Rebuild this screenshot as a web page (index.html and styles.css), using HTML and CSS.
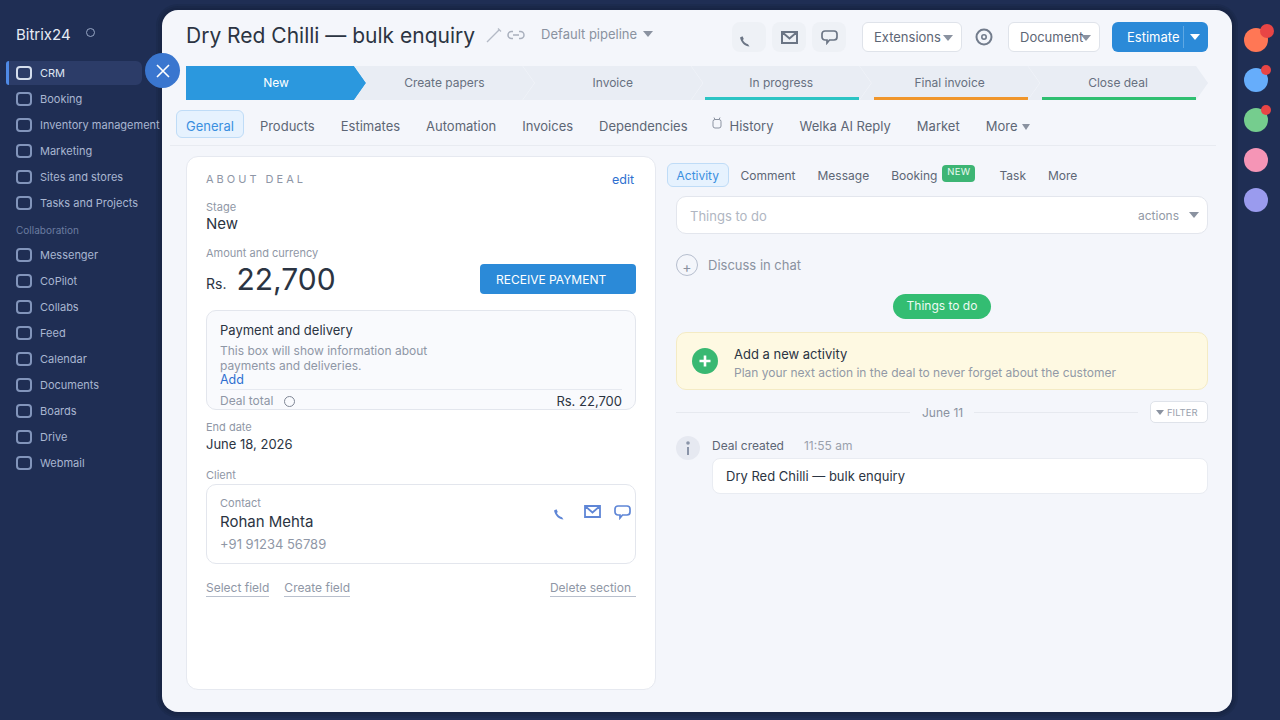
FILE: index.html
```html
<!DOCTYPE html>
<html lang="en">
<head>
    <meta charset="UTF-8">
    <title>Dry Red Chilli — bulk enquiry</title>
    <link rel="stylesheet" href="styles.css">
</head>
<body>
    <aside class="sidebar">
        <div class="brand">Bitrix24 <span class="brand-ring"></span></div>
        <nav class="nav">
            <a class="nav-item active"><span class="nav-icon"></span>CRM</a>
            <a class="nav-item"><span class="nav-icon"></span>Booking</a>
            <a class="nav-item"><span class="nav-icon"></span>Inventory management</a>
            <a class="nav-item"><span class="nav-icon"></span>Marketing</a>
            <a class="nav-item"><span class="nav-icon"></span>Sites and stores</a>
            <a class="nav-item"><span class="nav-icon"></span>Tasks and Projects</a>
            <div class="nav-group">Collaboration</div>
            <a class="nav-item"><span class="nav-icon"></span>Messenger</a>
            <a class="nav-item"><span class="nav-icon"></span>CoPilot</a>
            <a class="nav-item"><span class="nav-icon"></span>Collabs</a>
            <a class="nav-item"><span class="nav-icon"></span>Feed</a>
            <a class="nav-item"><span class="nav-icon"></span>Calendar</a>
            <a class="nav-item"><span class="nav-icon"></span>Documents</a>
            <a class="nav-item"><span class="nav-icon"></span>Boards</a>
            <a class="nav-item"><span class="nav-icon"></span>Drive</a>
            <a class="nav-item"><span class="nav-icon"></span>Webmail</a>
        </nav>
    </aside>

    <button class="close-btn">
        <svg width="14" height="14" viewBox="0 0 14 14"><path d="M1 1L13 13M13 1L1 13" stroke="#fff" stroke-width="1.6" fill="none"/></svg>
    </button>

    <main class="main">
        <header class="head">
            <h1 class="title">Dry Red Chilli — bulk enquiry</h1>
            <svg class="title-icon" width="16" height="16" viewBox="0 0 16 16"><path d="M1 15L13 3M12 1.500L15 4.500" stroke="#b4bac6" stroke-width="1.400" fill="none"/></svg>
            <svg class="title-icon link-icon" width="18" height="10" viewBox="0 0 18 10"><path d="M6 1.500H4.500a3.500 3.500 0 0 0 0 7H6M12 1.500h1.500a3.500 3.500 0 0 1 0 7H12M6 5h6" stroke="#a9b0bd" stroke-width="1.500" fill="none"/></svg>
            <span class="pipeline">Default pipeline <i class="caret"></i></span>
            <div class="head-actions">
                <span class="icon-btn">
                    <svg class="phone-glyph" width="12" height="12" viewBox="0 0 12 12"><path d="M1 2.500L3.500 1.200L4.800 4L3.800 5C4.800 7 6.300 8.300 9 9.300L10.500 11.500C6 11.500 2 7.500 1 2.500Z" fill="#6b7585"/></svg>
                </span>
                <span class="icon-btn">
                    <svg width="17" height="13" viewBox="0 0 17 13"><path d="M1 1H16V12H1ZM1 1L8.500 7.500L16 1" stroke="#6b7585" stroke-width="2" fill="none"/></svg>
                </span>
                <span class="icon-btn">
                    <svg width="17" height="15" viewBox="0 0 17 15"><path d="M4 1H13a3 3 0 0 1 3 3V7a3 3 0 0 1-3 3H8.500L6 13V10H4A3 3 0 0 1 1 7V4A3 3 0 0 1 4 1Z" stroke="#6b7585" stroke-width="1.700" fill="none"/></svg>
                </span>
                <button class="btn btn-ext">Extensions<i class="caret caret-btn"></i></button>
                <svg class="target" width="18" height="18" viewBox="0 0 18 18"><circle cx="9" cy="9" r="7.500" stroke="#727c8c" stroke-width="2" fill="none"/><circle cx="9" cy="9" r="2.200" stroke="#727c8c" stroke-width="1.600" fill="none"/></svg>
                <button class="btn btn-doc">Document<i class="caret caret-doc"></i></button>
                <button class="btn btn-estimate">Estimate<span class="split"></span><i class="caret caret-white"></i></button>
            </div>
        </header>

        <div class="stages">
            <div class="stage stage-new">New</div>
            <div class="stage">Create papers</div>
            <div class="stage">Invoice</div>
            <div class="stage">In progress<span class="stage-bar bar-teal"></span></div>
            <div class="stage">Final invoice<span class="stage-bar bar-orange"></span></div>
            <div class="stage">Close deal<span class="stage-bar bar-green"></span></div>
        </div>

        <div class="tabs">
            <a class="tab active">General</a>
            <a class="tab">Products</a>
            <a class="tab">Estimates</a>
            <a class="tab">Automation</a>
            <a class="tab">Invoices</a>
            <a class="tab">Dependencies</a>
            <a class="tab tab-history">
                <svg width="10" height="12" viewBox="0 0 10 12"><rect x="1" y="2.500" width="8" height="8.500" rx="2" stroke="#8b93a1" fill="none"/><path d="M2 0.500L3 2.500M8 0.500L7 2.500" stroke="#8b93a1" fill="none"/></svg>
                History
            </a>
            <a class="tab">Welka AI Reply</a>
            <a class="tab">Market</a>
            <a class="tab">More <i class="caret"></i></a>
        </div>

        <div class="content">
            <section class="card">
                <div class="card-head">
                    <span class="card-title">ABOUT DEAL</span>
                    <a class="link">edit</a>
                </div>

                <div class="label label-stage">Stage</div>
                <div class="value-big">New</div>

                <div class="label label-amount">Amount and currency</div>
                <div class="amount-row">
                    <span class="currency">Rs.</span>
                    <span class="amount">22,700</span>
                    <button class="btn-pay">RECEIVE PAYMENT</button>
                </div>

                <div class="pay-box">
                    <div class="pay-title">Payment and delivery</div>
                    <p class="pay-desc">This box will show information about<br>payments and deliveries.</p>
                    <a class="link pay-add">Add</a>
                    <div class="pay-total">
                        <span class="pay-total-label">Deal total <span class="ring"></span></span>
                        <span class="pay-total-value">Rs. 22,700</span>
                    </div>
                </div>

                <div class="label label-end">End date</div>
                <div class="value">June 18, 2026</div>

                <div class="label label-client">Client</div>
                <div class="client-box">
                    <div>
                        <div class="label">Contact</div>
                        <div class="client-name">Rohan Mehta</div>
                        <div class="client-phone">+91 91234 56789</div>
                    </div>
                    <div class="client-icons">
                        <svg class="client-phone-icon" width="12" height="12" viewBox="0 0 12 12"><path d="M1 2.500L3.500 1.200L4.800 4L3.800 5C4.800 7 6.300 8.300 9 9.300L10.500 11.500C6 11.500 2 7.500 1 2.500Z" fill="#5f86d6"/></svg>
                        <svg width="17" height="13" viewBox="0 0 17 13"><path d="M1 1H16V12H1ZM1 1L8.500 7.500L16 1" stroke="#5f86d6" stroke-width="1.800" fill="none"/></svg>
                        <svg width="17" height="15" viewBox="0 0 17 15"><path d="M4 1H13a3 3 0 0 1 3 3V7a3 3 0 0 1-3 3H8.500L6 13V10H4A3 3 0 0 1 1 7V4A3 3 0 0 1 4 1Z" stroke="#5f86d6" stroke-width="1.700" fill="none"/></svg>
                    </div>
                </div>

                <div class="card-actions">
                    <a class="action">Select field</a>
                    <a class="action">Create field</a>
                    <a class="action action-right">Delete section</a>
                </div>
            </section>

            <section class="activity">
                <div class="activity-tabs">
                    <a class="atab active">Activity</a>
                    <a class="atab">Comment</a>
                    <a class="atab">Message</a>
                    <a class="atab atab-booking">Booking <span class="badge-new">NEW</span></a>
                    <a class="atab">Task</a>
                    <a class="atab">More</a>
                </div>

                <div class="todo-input">
                    <span class="todo-placeholder">Things to do</span>
                    <span class="todo-actions">actions</span>
                    <i class="caret caret-actions"></i>
                </div>

                <div class="discuss">
                    <span class="discuss-plus">+</span>
                    Discuss in chat
                </div>

                <div class="pill-row"><span class="pill">Things to do</span></div>

                <div class="add-box">
                    <span class="add-icon">
                        <svg width="12" height="12" viewBox="0 0 12 12"><path d="M6 0.500V11.500M0.500 6H11.500" stroke="#fff" stroke-width="2.600" fill="none"/></svg>
                    </span>
                    <div>
                        <div class="add-title">Add a new activity</div>
                        <div class="add-desc">Plan your next action in the deal to never forget about the customer</div>
                    </div>
                </div>

                <div class="date-row">
                    <span class="date-line date-line-left"></span>
                    <span class="date-text">June 11</span>
                    <span class="date-line"></span>
                    <button class="filter"><i class="caret caret-filter"></i>FILTER</button>
                </div>

                <div class="event">
                    <span class="event-icon">
                        <svg width="4" height="14" viewBox="0 0 4 14"><circle cx="2" cy="2" r="1.800" fill="#8a94a8"/><path d="M2 6V14" stroke="#8a94a8" stroke-width="2"/></svg>
                    </span>
                    <div class="event-body">
                        <div class="event-head"><span class="event-name">Deal created</span><span class="event-time">11:55 am</span></div>
                        <div class="event-card">Dry Red Chilli — bulk enquiry</div>
                    </div>
                </div>
            </section>
        </div>
    </main>

    <aside class="rail">
        <span class="rail-dot dot-orange"><i class="rail-badge rail-badge-big"></i></span>
        <span class="rail-dot dot-blue"><i class="rail-badge"></i></span>
        <span class="rail-dot dot-green"><i class="rail-badge"></i></span>
        <span class="rail-dot dot-pink"></span>
        <span class="rail-dot dot-violet"></span>
    </aside>
</body>
</html>
```

FILE: styles.css
```css
* {
    box-sizing: border-box;
}
body {
    margin: 0;
    height: 720px;
    overflow: hidden;
    padding-top: 10px;
    display: flex;
    align-items: flex-start;
    background: #1f2e54;
    font-family: Inter, "Liberation Sans", sans-serif;
    color: #2b3442;
}
button {
    font-family: inherit;
}
.caret {
    display: inline-block;
    width: 0;
    height: 0;
    border-left: 5px solid transparent;
    border-right: 5px solid transparent;
    border-top: 6px solid #8a92a0;
}

/* sidebar */
.sidebar {
    width: 162px;
    flex: none;
    position: relative;
    z-index: 1;
    padding: 15px 0 0 6px;
}
.brand {
    display: flex;
    height: 20px;
    line-height: 20px;
    padding-left: 10px;
    font-size: 15px;
    color: #e6ebf4;
}
.brand-ring {
    width: 9px;
    height: 9px;
    margin: 3px 0 0 15px;
    border: 1.5px solid #97a6c4;
    border-radius: 50%;
}
.nav {
    margin-top: 16px;
    display: flex;
    flex-direction: column;
    gap: 2px;
}
.nav-item {
    display: flex;
    align-items: center;
    gap: 8px;
    width: 136px;
    height: 24px;
    padding-left: 10px;
    font-size: 11px;
    white-space: nowrap;
    color: #a9b6d1;
}
.nav-item.active {
    padding-left: 7px;
    border-left: 3px solid #4f8ae6;
    border-radius: 3px 6px 6px 3px;
    background: #2c3c68;
    color: #dfe6f2;
}
.nav-icon {
    flex: none;
    width: 16px;
    height: 14px;
    border: 2px solid #8295bb;
    border-radius: 4px;
}
.active .nav-icon {
    border-color: #d5deed;
}
.nav-group {
    padding: 7px 0 4px 10px;
    font-size: 10px;
    line-height: 13px;
    color: #6b7ca0;
}
.close-btn {
    position: absolute;
    left: 145px;
    top: 53px;
    z-index: 2;
    display: flex;
    align-items: center;
    justify-content: center;
    width: 35px;
    height: 35px;
    padding: 0;
    border: none;
    border-radius: 50%;
    background: #3a76cf;
}

/* main panel */
.main {
    width: 1070px;
    height: 702px;
    flex: none;
    padding: 12px 24px 22px;
    border-radius: 16px;
    background: #f4f6fb;
    box-shadow: 0 0 0 2px #182545, 0 0 0 4px #1a2849, 0 0 0 6px #1c2b4e;
}
.head {
    display: flex;
    align-items: center;
    height: 30px;
}
.title {
    margin: -4px 0 0;
    font-size: 21px;
    font-weight: 400;
    white-space: nowrap;
    color: #2b3442;
}
.title-icon {
    flex: none;
    margin: -4px 0 0 11px;
}
.link-icon {
    margin-left: 5px;
}
.pipeline {
    margin: -6px 0 0 16px;
    font-size: 13px;
    color: #8a92a0;
}
.pipeline .caret {
    margin-left: 2px;
    vertical-align: 2px;
}
.head-actions {
    display: flex;
    align-items: center;
    margin-left: auto;
}
.icon-btn {
    display: flex;
    align-items: center;
    justify-content: center;
    width: 34px;
    height: 30px;
    margin-right: 6px;
    border-radius: 8px;
    background: #eef1f6;
}
.phone-glyph {
    margin: 7px 8px 0 0;
}
.btn {
    position: relative;
    height: 30px;
    padding: 0 0 0 11px;
    border: 1px solid #dfe3ea;
    border-radius: 6px;
    background: #fff;
    font-size: 13px;
    text-align: left;
    color: #5d6675;
}
.btn-ext {
    width: 100px;
    margin-left: 10px;
}
.caret-btn {
    margin-left: 2px;
    vertical-align: 1px;
}
.target {
    margin: 0 15px 0 13px;
}
.btn-doc {
    width: 92px;
}
.caret-doc {
    position: absolute;
    right: 8px;
    top: 12px;
}
.btn-estimate {
    display: flex;
    align-items: center;
    width: 96px;
    margin-left: 12px;
    padding-left: 15px;
    border: none;
    background: #2b8ad8;
    color: #fff;
}
.split {
    width: 1px;
    height: 22px;
    margin: 0 6px 0 4px;
    background: #5fa8e3;
}
.caret-white {
    border-top-color: #fff;
}

/* stages */
.stages {
    display: flex;
    height: 34px;
    margin-top: 14px;
}
.stage {
    position: relative;
    flex: none;
    width: 180px;
    margin-right: -11.6px;
    line-height: 33px;
    text-align: center;
    font-size: 12px;
    color: #677080;
    background: #e9edf4;
    clip-path: polygon(0 0, 168px 0, 180px 50%, 168px 100%, 0 100%, 12px 50%);
}
.stage-new {
    background: #2b98de;
    color: #fff;
    clip-path: polygon(0 0, 168px 0, 180px 50%, 168px 100%, 0 100%);
}
.stage-bar {
    position: absolute;
    left: 14px;
    right: 12px;
    bottom: 0;
    height: 3px;
}
.bar-teal {
    background: #2cc4c4;
}
.bar-orange {
    background: #f0962b;
}
.bar-green {
    background: #2fbf71;
}

/* tabs */
.tabs {
    display: flex;
    gap: 6px;
    height: 36px;
    margin: 10px -8px 0 -16px;
    padding-left: 6px;
    border-bottom: 1px solid #e8ebf1;
}
.tab {
    display: flex;
    align-items: center;
    height: 28px;
    padding: 3px 9px 0;
    border: 1px solid transparent;
    border-radius: 6px;
    font-size: 13px;
    white-space: nowrap;
    color: #5d6675;
}
.tab.active {
    border-color: #bfdcf7;
    background: #e6f2fe;
    color: #3a8fe0;
}
.tab .caret {
    margin: 2px 0 0 5px;
    border-left-width: 4.5px;
    border-right-width: 4.5px;
}
.tab-history svg {
    margin: -6px 8px 0 -2px;
}

/* layout below tabs */
.content {
    display: flex;
    margin-top: 10px;
    height: 534px;
}
.card {
    flex: none;
    width: 470px;
    padding: 0 19px;
    border: 1px solid #e6e9f0;
    border-radius: 12px;
    background: #fff;
}
.card-head {
    display: flex;
    justify-content: space-between;
    align-items: center;
    height: 14px;
    margin-top: 15px;
}
.card-title {
    font-size: 11px;
    letter-spacing: 3px;
    color: #8e96a6;
}
.link {
    font-size: 12.5px;
    color: #2f6fd0;
}
.card-head .link {
    margin-right: 2px;
}
.label {
    font-size: 11px;
    line-height: 14px;
    color: #8f97a6;
}
.label-stage {
    margin-top: 14px;
}
.value-big {
    font-size: 15px;
    line-height: 18px;
    margin-top: 1px;
}
.label-amount {
    margin-top: 13px;
}
.amount-row {
    display: flex;
    align-items: center;
    height: 34px;
    margin-top: 2px;
}
.currency {
    font-size: 14px;
    margin-top: 8px;
}
.amount {
    margin-left: 10px;
    font-size: 30px;
    line-height: 34px;
}
.btn-pay {
    height: 30px;
    width: 156px;
    margin: 0 0 0 auto;
    padding: 0 0 0 16px;
    border: none;
    border-radius: 4px;
    background: #2b8ad8;
    font-size: 12px;
    text-align: left;
    color: #fff;
}
.pay-box {
    height: 100px;
    margin-top: 14px;
    padding: 11px 13px 0 13px;
    border: 1px solid #e3e6ed;
    border-radius: 10px;
    background: #f9fafd;
}
.pay-title {
    font-size: 13px;
    line-height: 16px;
}
.pay-desc {
    margin: 5px 0 0;
    font-size: 12px;
    line-height: 15px;
    color: #8f97a6;
}
.pay-add {
    display: block;
    font-size: 12.5px;
    line-height: 14px;
}
.pay-total {
    display: flex;
    justify-content: space-between;
    margin-top: 2px;
    padding-top: 3px;
    border-top: 1px solid #e6e9f0;
    line-height: 16px;
}
.pay-total-label {
    display: flex;
    align-items: center;
    gap: 11px;
    font-size: 12px;
    color: #8f97a6;
}
.ring {
    width: 11px;
    height: 11px;
    border: 1px solid #7f8695;
    border-radius: 50%;
}
.pay-total-value {
    font-size: 13px;
}
.label-end {
    margin-top: 10px;
}
.value {
    margin-top: 2px;
    font-size: 13px;
    line-height: 17px;
}
.label-client {
    margin-top: 15px;
}
.client-box {
    display: flex;
    justify-content: space-between;
    height: 80px;
    margin-top: 2px;
    padding: 11px 4px 0 13px;
    border: 1px solid #e3e6ed;
    border-radius: 10px;
}
.client-name {
    margin-top: 2px;
    font-size: 15px;
    line-height: 20px;
}
.client-phone {
    margin-top: 3px;
    font-size: 13px;
    line-height: 18px;
    color: #8f97a6;
}
.client-icons {
    display: flex;
    gap: 13px;
    margin-top: 9px;
}
.client-phone-icon {
    margin: 3px 6px 0 0;
}
.card-actions {
    display: flex;
    gap: 15px;
    margin-top: 16px;
}
.action {
    padding-bottom: 1px;
    border-bottom: 1px solid #b9c0cd;
    font-size: 12px;
    line-height: 15px;
    color: #8f97a6;
}
.action-right {
    margin-left: auto;
    padding-right: 5px;
}

/* activity column */
.activity {
    flex: 1;
    padding-left: 20px;
}
.activity-tabs {
    display: flex;
    align-items: center;
    gap: 2px;
    height: 24px;
    margin: 7px 0 0 -9px;
}
.atab {
    display: flex;
    align-items: center;
    height: 24px;
    padding: 0 9px;
    border: 1px solid transparent;
    border-radius: 6px;
    font-size: 12px;
    white-space: nowrap;
    color: #5d6675;
}
.atab.active {
    padding: 0 8.5px;
    border-color: #bfdcf7;
    background: #e6f2fe;
    color: #3a8fe0;
}
.badge-new {
    height: 17px;
    margin: -3px 0 0 5px;
    padding: 0 5px;
    border-radius: 4px;
    background: #3db574;
    font-size: 9.5px;
    line-height: 13px;
    letter-spacing: 0.3px;
    color: #e9f9f0;
}
.atab-booking {
    margin-right: 2px;
}
.todo-input {
    display: flex;
    align-items: center;
    height: 38px;
    margin-top: 9px;
    padding: 1px 8px 0 13px;
    border: 1px solid #e3e6ed;
    border-radius: 10px;
    background: #fff;
    font-size: 13px;
}
.todo-placeholder {
    color: #b0b6c2;
}
.todo-actions {
    margin-left: auto;
    font-size: 12px;
    color: #9299a6;
}
.caret-actions {
    margin: -2px 0 0 10px;
}
.discuss {
    display: flex;
    align-items: center;
    gap: 10px;
    height: 22px;
    margin-top: 20px;
    font-size: 13px;
    color: #8a92a0;
}
.discuss-plus {
    width: 22px;
    height: 22px;
    padding-top: 3px;
    border: 1px solid #b6bece;
    border-radius: 50%;
    font-size: 14px;
    line-height: 18px;
    text-align: center;
}
.pill-row {
    display: flex;
    justify-content: center;
    margin-top: 18px;
}
.pill {
    height: 25px;
    padding: 0 14px;
    border-radius: 13px;
    background: #33bd72;
    font-size: 12px;
    line-height: 24px;
    color: #eefaf3;
}
.add-box {
    display: flex;
    align-items: center;
    gap: 16px;
    height: 58px;
    margin-top: 13px;
    padding: 0 0 0 15px;
    border: 1px solid #f4ebc4;
    border-radius: 10px;
    background: #fef9e2;
}
.add-title {
    padding-top: 4px;
    font-size: 13px;
    line-height: 17px;
}
.add-desc {
    margin-top: 2px;
    font-size: 12px;
    line-height: 15px;
    color: #9299a6;
}
.add-icon {
    display: flex;
    align-items: center;
    justify-content: center;
    width: 26px;
    height: 26px;
    border-radius: 50%;
    background: #39b872;
}
.date-row {
    display: flex;
    align-items: center;
    height: 22px;
    margin-top: 11px;
}
.date-line {
    flex: 1;
    height: 1px;
    background: #e6e9ef;
}
.date-line-left {
    flex: none;
    width: 234px;
}
.date-text {
    padding: 0 11px 0 12px;
    font-size: 12px;
    color: #8a92a0;
}
.filter {
    display: flex;
    align-items: center;
    width: 58px;
    height: 22px;
    margin-left: 12px;
    padding: 0 0 0 5px;
    border: 1px solid #dfe3ea;
    border-radius: 5px;
    background: #fff;
    font-size: 9.5px;
    color: #9aa1ad;
}
.caret-filter {
    margin-right: 3px;
    border-left-width: 4px;
    border-right-width: 4px;
    border-top-width: 5px;
}
.event {
    display: flex;
    gap: 12px;
    margin-top: 13px;
}
.event-icon {
    display: flex;
    flex: none;
    align-items: center;
    justify-content: center;
    width: 24px;
    height: 24px;
    border-radius: 50%;
    background: #e6e9f1;
}
.event-body {
    flex: 1;
}
.event-head {
    display: flex;
    gap: 20px;
    height: 19px;
    font-size: 12px;
    line-height: 20px;
}
.event-name {
    color: #5d6675;
}
.event-time {
    color: #9aa1ad;
}
.event-card {
    height: 36px;
    margin-top: 3px;
    padding-left: 13px;
    border: 1px solid #e9ecf2;
    border-radius: 8px;
    background: #fff;
    font-size: 13px;
    line-height: 34px;
}

/* right rail */
.rail {
    display: flex;
    flex-direction: column;
    gap: 16px;
    flex: none;
    width: 48px;
    padding: 18px 0 0 12px;
}
.rail-dot {
    position: relative;
    display: block;
    width: 24px;
    height: 24px;
    border-radius: 50%;
}
.dot-orange {
    background: #ff7755;
}
.dot-blue {
    background: #66adfb;
}
.dot-green {
    background: #75cd8e;
}
.dot-pink {
    background: #f595b6;
}
.dot-violet {
    background: #9a9bee;
}
.rail-badge {
    position: absolute;
    top: -3px;
    right: -3px;
    width: 10px;
    height: 10px;
    border-radius: 50%;
    background: #e84545;
}
.rail-badge-big {
    top: -4px;
    right: -6px;
    width: 14px;
    height: 14px;
}
```
